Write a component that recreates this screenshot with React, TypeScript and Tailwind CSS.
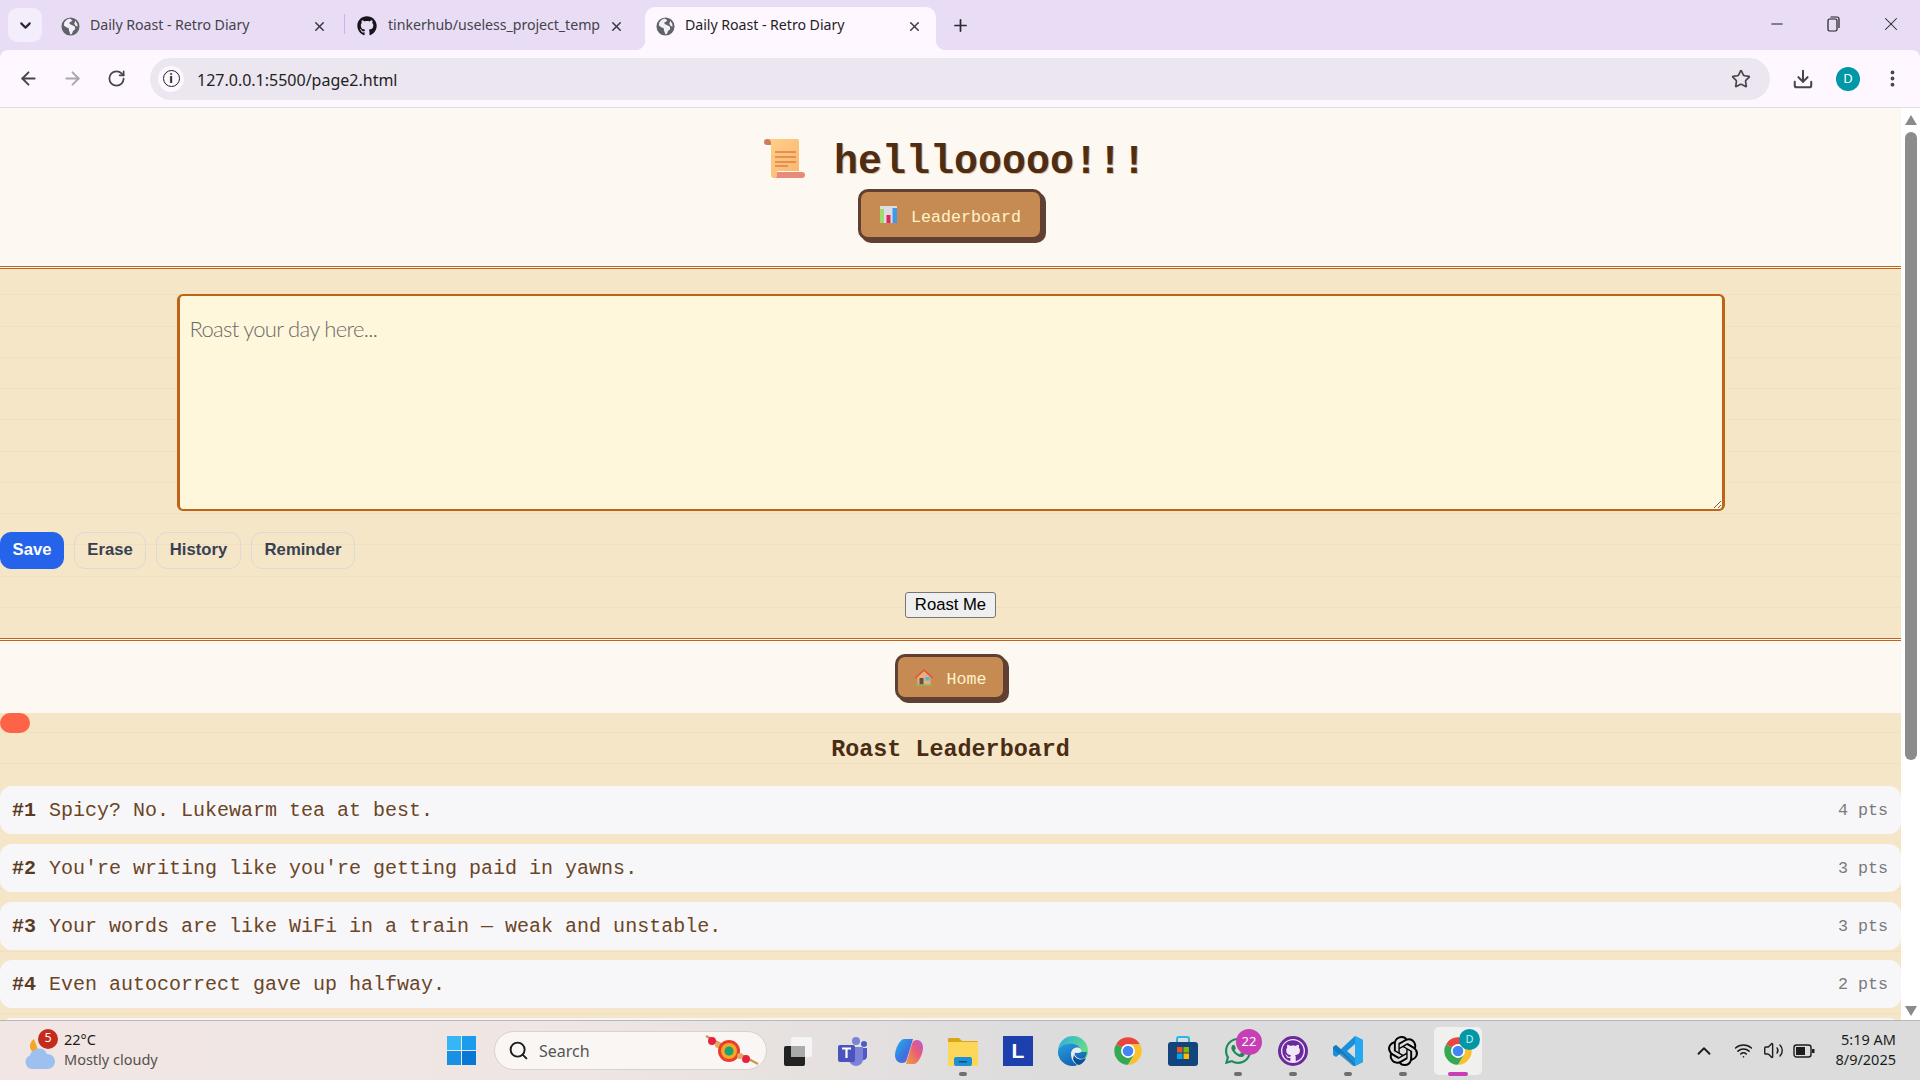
import { ArrowLeft, ArrowRight, RotateCw, Star, Download, EllipsisVertical, X, Plus, ChevronDown, ChevronUp, Minus, Search, Wifi, Volume2 } from "lucide-react";
import { FaGithub, FaWhatsapp } from "react-icons/fa";
import { SiOpenai } from "react-icons/si";

const ui = "font-['Noto_Sans','Open_Sans',sans-serif]";

function Globe() {
  return (
    <svg width="19" height="19" viewBox="0 0 20 20" className="shrink-0">
      <circle cx="10" cy="10" r="9.5" fill="#5f6368" />
      <path d="M9 1.5 6 3 3.5 5.5 3 9l3 2 2 .5.5 3 1.5 4 1.5-.5 1-3 2.5-2.5-.5-2.5-3-1.5-2-1-1-1.5 2-1 1.5-1.5z" fill="#f4eefb" />
      <path d="M15 4l2 3 .5 3-2-.5-1.5-2.5z" fill="#f4eefb" />
    </svg>
  );
}

function Tab({ w, pl, pr, gap, icon, title, active }: { w: string; pl: string; pr: string; gap: string; icon: React.ReactNode; title: string; active?: boolean }) {
  return (
    <div className={`relative flex h-[43px] shrink-0 items-center pb-[5px] ${w} ${pl} ${pr} ${gap} ${active ? "rounded-t-[10px] bg-[#fef7ff] text-[#1f1f1f]" : "text-[#45434a]"}`}>
      {icon}
      <span className="min-w-0 flex-1 whitespace-nowrap pb-[2px] text-[14.2px] tracking-[-0.05px]">{title}</span>
      <X size={15} strokeWidth={2.4} className="shrink-0 text-[#3c3a40]" />
      {active && <span className="absolute bottom-0 left-[-10px] size-[10px] bg-[radial-gradient(circle_at_0_0,transparent_10px,#fef7ff_10.5px)]" />}
      {active && <span className="absolute bottom-0 right-[-10px] size-[10px] bg-[radial-gradient(circle_at_100%_0,transparent_10px,#fef7ff_10.5px)]" />}
    </div>
  );
}

function ScrollEmoji() {
  return (
    <svg width="42" height="42" viewBox="0 0 42 42" className="shrink-0">
      <defs>
        <linearGradient id="sc" x1="0" y1="0" x2="1" y2="1"><stop offset="0" stopColor="#ffd08a" /><stop offset="1" stopColor="#fbb56e" /></linearGradient>
      </defs>
      <path d="M1 5a3 3 0 0 1 3-3h4v6H4a3 3 0 0 1-3-3z" fill="#cf7d55" />
      <path d="M4 2h30a2 2 0 0 1 2 2v30H14v4a3 3 0 0 1-3 3H11a3 3 0 0 1-3-3V6a4 4 0 0 0-4-4z" fill="url(#sc)" />
      <path d="M14 35h25a3 3 0 0 1 0 6H11a3 3 0 0 0 3-3z" fill="#e58b78" />
      <path d="M12 15h21M12 20h21M12 25h21M12 29h13" stroke="#d98147" strokeWidth="1.6" />
    </svg>
  );
}

function ChartEmoji() {
  return (
    <svg width="17" height="17" viewBox="0 0 17 17" className="shrink-0">
      <rect x="0" y="0" width="17" height="17" fill="#dcdce2" />
      <rect x="0" y="3" width="4" height="14" fill="#9ddc6a" />
      <rect x="6.5" y="9" width="4" height="8" fill="#e0245e" />
      <rect x="12.5" y="2" width="4.5" height="15" fill="#3b9be8" />
    </svg>
  );
}

function HouseEmoji() {
  return (
    <svg width="18" height="17" viewBox="0 0 18 17" className="shrink-0">
      <path d="M2.5 8 9 2l6.5 6v7.5h-13z" fill="#e2b27c" />
      <path d="M0.5 9 9 1l8.5 8" fill="none" stroke="#e8543c" strokeWidth="1.6" />
      <rect x="4.5" y="9" width="4" height="6.5" fill="#6d4c41" />
      <rect x="10.5" y="8" width="4" height="3.5" fill="#4fb3f0" />
      <rect x="0.5" y="15.5" width="17" height="1" fill="#6fcf5f" />
    </svg>
  );
}

function RetroButton({ icon, label, cls }: { icon: React.ReactNode; label: string; cls: string }) {
  return (
    <button className={`mx-auto flex items-center justify-center gap-[14px] rounded-[10px] border-[3px] border-[#5f4033] bg-[#c68b53] text-[16.67px] text-[#fff3c9] shadow-[3px_3px_0_#5f4033] ${cls}`}>
      {icon}
      <span className="pt-[5px]">{label}</span>
    </button>
  );
}

function DoubleRule() {
  return <div className="h-[3px] border-y border-[#bd6418] bg-[#fdf8f0]" />;
}

function PillButton({ label, cls }: { label: string; cls: string }) {
  return <button className={`flex h-[37px] items-center rounded-[11px] border px-[13px] pb-[2px] text-[16.67px] font-bold ${cls}`}>{label}</button>;
}

function Row({ n, text, pts }: { n: number; text: string; pts: number }) {
  return (
    <div className="flex h-[48px] shrink-0 items-center rounded-[12px] bg-[#f7f7fa] pl-[12px] pr-[13px]">
      <span className="mr-[13px] pt-[2px] text-[20px] font-bold text-[#5c3a1e]">#{n}</span>
      <span className="flex-1 pt-[2px] text-[20px] text-[#6b4526]">{text}</span>
      <span className="text-[16.67px] text-[#7a7a7a]">{pts} pts</span>
    </div>
  );
}

function ChromeIcon() {
  return (
    <svg width="30" height="30" viewBox="0 0 48 48">
      <path d="M24 2A22 22 0 0 1 43 13H24A11 11 0 0 0 14.5 18.5L5 13A22 22 0 0 1 24 2z" fill="#e8453c" />
      <path d="M43 13A22 22 0 0 1 24 46L33.5 29.5A11 11 0 0 0 24 13z" fill="#fbc02d" />
      <path d="M5 13A22 22 0 0 0 24 46L33.5 29.5A11 11 0 0 1 14.5 18.5z" fill="#34a853" />
      <circle cx="24" cy="24" r="11" fill="#fff" />
      <circle cx="24" cy="24" r="8.5" fill="#4285f4" />
    </svg>
  );
}

function Slot({ children, dot, active }: { children: React.ReactNode; dot?: boolean; active?: boolean }) {
  return (
    <div className="relative size-[30px] shrink-0">
      {active && <span className="absolute left-[-9px] top-[-9px] h-[48px] w-[48px] rounded-[5px] bg-[#f0f0ef]" />}
      <div className="relative">{children}</div>
      {dot && <span className="absolute left-[11px] top-[36px] h-[4px] w-[8px] rounded-full bg-[#6f6f6f]" />}
      {active && <span className="absolute left-[5px] top-[36px] h-[4px] w-[20px] rounded-full bg-[#c83fb5]" />}
    </div>
  );
}

export default function App() {
  return (
    <div className={`flex h-[1080px] w-[1920px] flex-col overflow-hidden bg-[#e9ddf6] ${ui}`}>
      {/* Tab strip */}
      <div className="flex h-[50px] shrink-0 items-end">
        <div className="mb-[8px] ml-[8px] mr-[8px] flex size-[34px] items-center justify-center rounded-[9px] bg-[#f4edfb] text-[#2b2930]">
          <ChevronDown size={17} strokeWidth={3} />
        </div>
        <Tab w="w-[294px]" pl="pl-[11px]" pr="pr-[17px]" gap="gap-[10px]" icon={<Globe />} title="Daily Roast - Retro Diary" />
        <div className="mb-[16px] h-[20px] w-px bg-[#c9b3ec]" />
        <Tab w="w-[295px]" pl="pl-[12px]" pr="pr-[16px]" gap="gap-[11px]" icon={<FaGithub size={20} className="shrink-0 text-[#17151a]" />} title="tinkerhub/useless_project_temp" />
        <div className="w-[5px]" />
        <Tab active w="w-[291px]" pl="pl-[11px]" pr="pr-[14px]" gap="gap-[10px]" icon={<Globe />} title="Daily Roast - Retro Diary" />
        <Plus size={19} strokeWidth={2.2} className="mb-[15px] ml-[15px] text-[#2b2930]" />
        <div className="mb-[15px] ml-auto flex items-center pr-[18px] text-[#1f1f1f]">
          <Minus size={18} strokeWidth={1.4} className="mr-[38px]" />
          <svg width="18" height="18" viewBox="0 0 18 18" fill="none" stroke="currentColor" strokeWidth="1.2" className="mr-[38px]">
            <rect x="4" y="4" width="9" height="12" rx="1.5" />
            <path d="M6.5 2h6.5a2 2 0 0 1 2 2v9" />
          </svg>
          <X size={22} strokeWidth={1.1} />
        </div>
      </div>

      {/* Toolbar */}
      <div className="flex h-[58px] shrink-0 items-center rounded-t-[8px] border-b border-[#e0d9e6] bg-[#fef7ff] pl-[18px] text-[#47454c]">
        <ArrowLeft size={21} strokeWidth={2.2} />
        <ArrowRight size={21} strokeWidth={2.2} className="ml-[23px] text-[#a9a6ad]" />
        <RotateCw size={19} strokeWidth={2.2} className="ml-[24px]" />
        <div className="ml-[24px] flex h-[42px] w-[1620px] items-center rounded-full bg-[#ece6f0] pl-[8px] pr-[19px]">
          <div className="flex size-[26px] items-center justify-center rounded-full bg-[#fef7ff]">
            <span className="flex size-[17px] items-center justify-center rounded-full border-[1.5px] border-[#1f1f1f] text-[12px] font-bold leading-none text-[#1f1f1f]">i</span>
          </div>
          <span className="ml-[13px] flex-1 pt-[3px] text-[16px] text-[#1f1f1f]">127.0.0.1:5500/page2.html</span>
          <Star size={20} strokeWidth={2} />
        </div>
        <Download size={22} strokeWidth={2.2} className="ml-[22px]" />
        <div className="ml-[22px] flex size-[24px] items-center justify-center rounded-full bg-[#0097a7] text-[13px] text-white">D</div>
        <EllipsisVertical size={21} strokeWidth={2.4} className="ml-[22px]" />
      </div>

      {/* Page + scrollbar */}
      <div className="flex h-[912px] shrink-0">
        <div className="w-[1901px] overflow-hidden bg-[#f5e6c8] bg-[repeating-linear-gradient(180deg,transparent_0,transparent_30.25px,#f0dfc2_30.25px,#f0dfc2_31.25px)] font-['Liberation_Mono',monospace]">
          <header className="h-[158px] bg-[#fdf9f3]/95 pt-[25px]">
            <h1 className="flex h-[50px] items-center justify-center pl-[8px] text-[40px] font-bold text-[#4f2d14] [text-shadow:1px_1px_0_#dcc09a]">
              <ScrollEmoji />
              <span className="ml-[29px] pt-[10px]">helllooooo!!!</span>
            </h1>
            <RetroButton icon={<ChartEmoji />} label="Leaderboard" cls="mt-[6px] h-[51px] w-[185px]" />
          </header>
          <DoubleRule />

          <section className="h-[369px] pt-[25px]">
            <textarea
              placeholder="Roast your day here..."
              className="mx-auto block h-[217px] w-[1548px] rounded-[6px] border-x-[3px] border-y-2 border-[#bd6418] bg-[#fff7db] px-[10px] pb-[13px] pt-[16px] font-['Lato',sans-serif] text-[22px] font-light tracking-[-0.7px] outline-none placeholder:text-[#6a6a6a]"
            />
            <div className="mt-[21px] flex gap-[10px] font-['Liberation_Sans',sans-serif]">
              <PillButton label="Save" cls="w-[64px] justify-center border-[#2563eb] bg-[#2563eb] text-white" />
              <PillButton label="Erase" cls="w-[72px] justify-center border-[#dcd9d6] text-[#374151]" />
              <PillButton label="History" cls="w-[85px] justify-center border-[#dcd9d6] text-[#374151]" />
              <PillButton label="Reminder" cls="w-[104px] justify-center border-[#dcd9d6] text-[#374151]" />
            </div>
            <button className="mx-auto mt-[23px] flex h-[26px] w-[91px] items-center justify-center rounded-[3px] border border-[#767676] bg-[#efefef] pb-[2px] font-['Liberation_Sans',sans-serif] text-[16.67px] text-black">
              Roast Me
            </button>
          </section>
          <DoubleRule />

          <div className="h-[72px] bg-[#fdf9f3]/95 pt-[13px]">
            <RetroButton icon={<HouseEmoji />} label="Home" cls="h-[46px] w-[111px]" />
          </div>

          <div className="h-[20px] w-[30px] rounded-[10px] bg-[#ff6347]" />
          <h3 className="h-[30px] text-center text-[23.4px] font-bold leading-[35px] text-[#4a2c14]">Roast Leaderboard</h3>
          <div className="mt-[23px] flex flex-col gap-[10px]">
            <Row n={1} text="Spicy? No. Lukewarm tea at best." pts={4} />
            <Row n={2} text="You're writing like you're getting paid in yawns." pts={3} />
            <Row n={3} text="Your words are like WiFi in a train — weak and unstable." pts={3} />
            <Row n={4} text="Even autocorrect gave up halfway." pts={2} />
            <div className="h-[48px] shrink-0 rounded-[12px] bg-[#f7f7fa]" />
          </div>
        </div>

        <div className="flex w-[19px] flex-col items-center bg-white pb-[3px] pt-[6px]">
          <svg width="12" height="12" viewBox="0 0 12 12"><polygon points="6,1 12,11 0,11" fill="#8a8a8a" /></svg>
          <div className="mt-[6px] h-[628px] w-[12px] rounded-full bg-[#8c8c8c]" />
          <svg width="12" height="12" viewBox="0 0 12 12" className="mt-auto"><polygon points="0,1 12,1 6,11" fill="#8a8a8a" /></svg>
        </div>
      </div>

      {/* Taskbar */}
      <div className="flex h-[60px] shrink-0 items-center border-t border-[#b9b7b7] bg-[linear-gradient(90deg,#f1e6e3,#efe6e3_30%,#dcdcdc_55%,#dbdcdb)]">
        <div className="flex w-[447px] shrink-0 items-center pl-[24px]">
          <div className="relative h-[40px] w-[31px]">
            <svg width="31" height="36" viewBox="0 0 31 36" className="absolute top-[4px]">
              <path d="M6 12a9 9 0 0 0 10 8L10 4a9 9 0 0 0-4 8z" fill="#f5a623" />
              <path d="M8 34a7 7 0 0 1-2-13.5A9 9 0 0 1 23 19a7.5 7.5 0 0 1 1 15z" fill="#9dc0f0" />
            </svg>
            <span className="absolute left-[14px] top-[-2px] flex size-[20px] items-center justify-center rounded-full bg-[#c42b1c] text-[12.5px] text-white">5</span>
          </div>
          <div className="ml-[9px] flex flex-col pb-[3px] text-[14.5px] leading-[20px]">
            <span className="text-[#1c1c1c]">22°C</span>
            <span className="text-[#55504f]">Mostly cloudy</span>
          </div>
        </div>
        <svg width="29" height="29" viewBox="0 0 29 29" className="shrink-0">
          <rect width="14" height="14" fill="#36b6f5" /><rect x="15" width="14" height="14" fill="#1c9cec" />
          <rect y="15" width="14" height="14" fill="#1a8fe6" /><rect x="15" y="15" width="14" height="14" fill="#0878d4" />
        </svg>
        <div className="relative ml-[18px] flex h-[39px] w-[273px] shrink-0 items-center rounded-full border border-[#d5d2d0] bg-[#f9f6f4] pl-[13px]">
          <Search size={21} strokeWidth={2.2} className="text-[#1c1c1c]" />
          <span className="ml-[10px] text-[16px] text-[#555]">Search</span>
          <svg width="56" height="34" viewBox="0 0 56 34" className="absolute right-[6px] top-[2px]">
            <path d="M2 2 54 30" stroke="#c9974f" strokeWidth="2" />
            <circle cx="8" cy="7" r="4" fill="#e8213f" /><circle cx="14" cy="11" r="3" fill="#e3a85c" />
            <circle cx="25" cy="17" r="11" fill="#ea3d2f" /><circle cx="25" cy="17" r="8" fill="#f5a623" /><circle cx="25" cy="17" r="4.5" fill="#16a37b" />
            <circle cx="42" cy="25" r="4" fill="#e8213f" /><circle cx="36" cy="22" r="3" fill="#e3a85c" />
          </svg>
        </div>
        <div className="ml-[16px] flex shrink-0 items-center gap-[25px]">
          <Slot>
            <svg width="30" height="30" viewBox="0 0 30 30">
              <rect x="8" y="1" width="21" height="20" rx="2" fill="#f5f5f5" />
              <rect x="1" y="10" width="21" height="20" rx="2" fill="#222" />
              <rect x="8" y="10" width="14" height="11" fill="#aaa" />
            </svg>
          </Slot>
          <Slot>
            <svg width="30" height="30" viewBox="0 0 30 30">
              <circle cx="18" cy="5" r="4" fill="#7b83d6" /><circle cx="26" cy="8" r="3" fill="#5059c9" />
              <path d="M22 12h7v9a5 5 0 0 1-7 3z" fill="#5059c9" />
              <path d="M11 11h14v12a7 7 0 0 1-14 0z" fill="#7b83d6" />
              <rect x="0" y="9" width="17" height="17" rx="2" fill="#4b53bc" />
              <path d="M4 12.5h9M8.5 12.5V22" stroke="#fff" strokeWidth="2.2" />
            </svg>
          </Slot>
          <Slot>
            <svg width="30" height="30" viewBox="0 0 30 30">
              <defs>
                <linearGradient id="co1" x1="0" y1="0" x2="1" y2="1"><stop offset="0" stopColor="#1fb6e8" /><stop offset="0.6" stopColor="#3f6fe0" /><stop offset="1" stopColor="#8a5bd8" /></linearGradient>
                <linearGradient id="co2" x1="0" y1="1" x2="1" y2="0"><stop offset="0" stopColor="#f0a03c" /><stop offset="0.6" stopColor="#e85a7c" /><stop offset="1" stopColor="#b25cd8" /></linearGradient>
              </defs>
              <path d="M9 2h9l-6 20c-1 3-2 4-5 4-4 0-7-3-7-8 0-6 5-16 9-16z" fill="url(#co1)" transform="translate(2 1)" />
              <path d="M21 28h-8l6-20c1-3 2-4 5-4 4 0 6 4 6 8 0 6-5 16-9 16z" fill="url(#co2)" />
            </svg>
          </Slot>
          <Slot dot>
            <svg width="30" height="30" viewBox="0 0 30 30">
              <path d="M0 3a1 1 0 0 1 1-1h10l3 3h15a1 1 0 0 1 1 1v6H0z" fill="#dba514" />
              <path d="M0 6h30v24H0z" fill="#fdd75a" />
              <rect x="6" y="21" width="18" height="9" rx="2" fill="#1f8fd6" />
              <rect x="11" y="25" width="8" height="1.5" fill="#0a4f86" />
            </svg>
          </Slot>
          <Slot>
            <div className="flex size-[30px] items-center justify-center bg-[#1e40af] font-['Liberation_Sans',sans-serif] text-[21px] font-bold text-white">L</div>
          </Slot>
          <Slot>
            <svg width="30" height="30" viewBox="0 0 30 30">
              <defs>
                <linearGradient id="ed" x1="0" y1="0" x2="1" y2="0.6"><stop offset="0" stopColor="#28aee0" /><stop offset="1" stopColor="#6fe07e" /></linearGradient>
                <linearGradient id="ed2" x1="0" y1="0" x2="0.6" y2="1"><stop offset="0" stopColor="#2a9fe0" /><stop offset="1" stopColor="#125fb0" /></linearGradient>
              </defs>
              <circle cx="15" cy="15" r="15" fill="url(#ed)" />
              <path d="M0 16C1 10 8 7 15 8c4 .5 8 3 8 8h6c-1 7-8 14-14 14C7 30 0 24 0 16z" fill="url(#ed2)" />
              <path d="M13 18c0-5 4-7 7-6.500 3 .5 4 3 3 4.500-1.500 1-5 1.500-6 .5-1 1 0 4 3 5.500 3 1.500 6 1 9-1-2 3.500-6 7-9 8-4-1-7-6-7-11z" fill="#e8eef2" />
              <path d="M15 23c1 3 4 6 6 6 3-1 6-4 7-7-3 1.500-6 2-9 .5-2-1-3-3-3-4z" fill="#0e4f9c" />
            </svg>
          </Slot>
          <Slot><ChromeIcon /></Slot>
          <Slot>
            <svg width="30" height="30" viewBox="0 0 30 30">
              <path d="M9 6V3a2 2 0 0 1 2-2h8a2 2 0 0 1 2 2v3" fill="none" stroke="#2bb5e8" strokeWidth="2" />
              <rect x="0" y="6" width="30" height="24" rx="3" fill="#13457c" />
              <rect x="9" y="11" width="5.500" height="5.500" fill="#f25022" /><rect x="15.500" y="11" width="5.500" height="5.500" fill="#7fba00" />
              <rect x="9" y="17.500" width="5.500" height="5.500" fill="#00a4ef" /><rect x="15.500" y="17.500" width="5.500" height="5.500" fill="#ffb900" />
            </svg>
          </Slot>
          <Slot dot>
            <FaWhatsapp size={30} className="text-[#1f8a5b]" />
            <span className="absolute left-[13px] top-[-7px] flex size-[26px] items-center justify-center rounded-full bg-[#c83fb5] text-[13px] text-white">22</span>
          </Slot>
          <Slot dot>
            <div className="flex size-[30px] items-center justify-center rounded-full border-[3px] border-[#6a2a9c] bg-[#f1e7f7]">
              <FaGithub size={22} className="text-[#6a2a9c]" />
            </div>
          </Slot>
          <Slot dot>
            <svg width="30" height="30" viewBox="0 0 30 30">
              <path d="M22 0 30 4v22l-8 4L8 17l-5 4-3-2v-8l3-2 5 4z" fill="#1c8fd9" />
              <path d="M22 0 30 4v22l-8 4z" fill="#25a9ee" />
              <path d="M22 8v14l-8-7z" fill="#dcdcdc" />
              <path d="M0 11l3-2 19 19v2h-2L0 13z" fill="#0f6fb6" opacity="0.7" />
            </svg>
          </Slot>
          <Slot dot><SiOpenai size={30} className="text-black" /></Slot>
          <Slot active>
            <ChromeIcon />
            <span className="absolute left-[16px] top-[-7px] flex size-[21px] items-center justify-center rounded-full bg-[#0097a7] text-[11px] text-[#c7ecef]">D</span>
          </Slot>
        </div>
        <div className="ml-auto flex shrink-0 items-center pr-[24px] text-[#1c1c1c]">
          <ChevronUp size={22} strokeWidth={2} className="mr-[19px]" />
          <Wifi size={19} strokeWidth={2} className="mr-[10px]" />
          <Volume2 size={21} strokeWidth={1.6} className="mr-[9px]" />
          <svg width="22" height="16" viewBox="0 0 22 16" className="mr-[20px]">
            <rect x="1" y="2" width="17" height="12" rx="2.500" fill="none" stroke="#1c1c1c" strokeWidth="1.4" />
            <rect x="3" y="4" width="9" height="8" fill="#1c1c1c" />
            <rect x="19" y="6" width="2.500" height="4" fill="#1c1c1c" />
          </svg>
          <div className="flex flex-col items-end pb-[3px] text-[14.5px] leading-[20px]">
            <span>5:19 AM</span>
            <span>8/9/2025</span>
          </div>
        </div>
      </div>
    </div>
  );
}
